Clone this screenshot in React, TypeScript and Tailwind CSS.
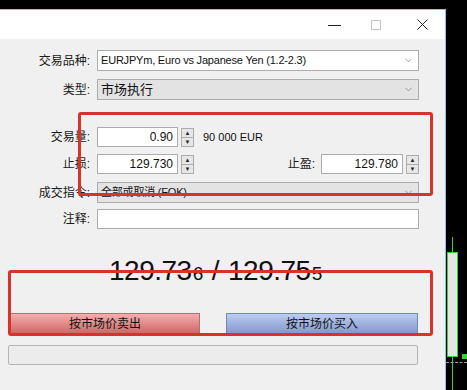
import { ChevronDown } from "lucide-react"

const cjk = { fontFamily: '"Liberation Sans", "Noto Sans CJK SC", sans-serif' }

function Label({ text }: { text: string }) {
  return <div className="w-[97px] pr-[7px] text-right text-[12px] text-[#1a1a1a] leading-none shrink-0">{text}</div>
}

function Select({ value, grey }: { value: string; grey?: boolean }) {
  return (
    <div className={`flex items-center h-[21px] w-[322px] border border-[#acacac] px-[3px] text-[11px] text-[#111] ${grey ? "bg-[#e3e3e3]" : "bg-white"}`}>
      <span className="flex-1 whitespace-nowrap tracking-[-0.2px]">{value}</span>
      <ChevronDown size={11} strokeWidth={1.2} className="text-[#555] mr-[1px]" />
    </div>
  )
}

function Spinner() {
  return (
    <div className="ml-[3px] flex flex-col h-[19px] w-[13px] border border-[#adadad] bg-[#e6e6e6]">
      <div className="flex-1 flex items-center justify-center border-b border-[#adadad] text-[6px] leading-none text-[#222]">▲</div>
      <div className="flex-1 flex items-center justify-center text-[6px] leading-none text-[#222]">▼</div>
    </div>
  )
}

function Num({ value, w }: { value: string; w: string }) {
  return (
    <div className={`h-[20px] ${w} border border-[#acacac] bg-white flex items-center justify-end pr-[4px] text-[12px] text-[#111]`}>{value}</div>
  )
}

export default function App() {
  return (
    <div className="w-[467px] h-[390px] bg-black flex relative overflow-hidden" style={cjk}>
      <div className="w-[446px] mt-[9px] border-t border-r border-[#8cc3e6] flex flex-col shrink-0">
        <div className="h-[29px] bg-white flex items-center justify-end">
          <div className="w-[13px] h-[1px] bg-[#222] mr-[30px] mt-[2px]" />
          <div className="w-[10px] h-[10px] border border-[#c4c4c4] mr-[36px]" />
          <svg width="11" height="11" viewBox="0 0 11 11" className="mr-[17px]">
            <path d="M0.5 0.5 L10.5 10.5 M10.5 0.5 L0.5 10.5" stroke="#222" strokeWidth="1" />
          </svg>
        </div>
        <div className="flex-1 bg-[#f0f0f0] flex flex-col pt-[11px]">
          <div className="flex items-center">
            <Label text="交易品种:" />
            <Select value="EURJPYm, Euro vs Japanese Yen (1.2-2.3)" />
          </div>
          <div className="flex items-center mt-[8px]">
            <Label text="类型:" />
            <div className="flex items-center h-[21px] w-[322px] border border-[#acacac] px-[3px] bg-[#e3e3e3] text-[13px] text-[#111]">
              <span className="flex-1">市场执行</span>
              <ChevronDown size={11} strokeWidth={1.2} className="text-[#555] mr-[1px]" />
            </div>
          </div>
          <div className="flex items-center mt-[27px]">
            <Label text="交易量:" />
            <Num value="0.90" w="w-[81px]" />
            <Spinner />
            <span className="ml-[9px] text-[11px] text-[#111]">90 000 EUR</span>
          </div>
          <div className="flex items-center mt-[7px]">
            <Label text="止损:" />
            <Num value="129.730" w="w-[81px]" />
            <Spinner />
            <span className="ml-auto mr-[6px] text-[12px] text-[#1a1a1a]">止盈:</span>
            <Num value="129.780" w="w-[82px]" />
            <Spinner />
            <div className="w-[26px]" />
          </div>
          <div className="flex items-center mt-[8px]">
            <Label text="成交指令:" />
            <Select value="全部或取消 (FOK)" grey />
          </div>
          <div className="flex items-center mt-[6px]">
            <Label text="注释:" />
            <div className="h-[20px] w-[322px] border border-[#acacac] bg-white" />
          </div>
          <div className="mt-[28px] pl-[109px] h-[28px] flex items-baseline text-[28px] leading-none text-[#111] tracking-[-0.5px]">
            <span>129.73</span>
            <span className="text-[19px] ml-[1px]">6</span>
            <span className="mx-[9px]">/</span>
            <span>129.75</span>
            <span className="text-[19px] ml-[1px]">5</span>
          </div>
          <div className="flex mt-[28px] px-[10px] gap-[26px] w-[428px]">
            <div className="w-[190px] h-[21px] border border-[#b07070] bg-gradient-to-b from-[#f4aeae] to-[#cf6868] flex items-center justify-center text-[12px] text-[#111]">按市场价卖出</div>
            <div className="w-[192px] h-[21px] border border-[#7088b8] bg-gradient-to-b from-[#bccdf0] to-[#8399d0] flex items-center justify-center text-[12px] text-[#111]">按市场价买入</div>
          </div>
          <div className="mt-[11px] ml-[8px] w-[410px] h-[20px] border border-[#b4b4b4] rounded-[2px] bg-[#ececec]" />
        </div>
      </div>
      <div className="flex-1 relative">
        <div className="absolute left-[6px] top-[237px] w-[1px] h-[153px] bg-[#3ccf3c]" />
        <div className="absolute left-[1px] top-[252px] w-[11px] h-[105px] border border-[#3ccf3c] bg-[#e3e6e3]" />
        <div className="absolute left-[0px] top-[362px] w-[21px] border-t border-dashed border-[#9aa09a]" />
        <div className="absolute left-[16px] top-[354px] w-[5px] h-[5px] bg-[#3ccf3c]" />
      </div>
      <div className="absolute left-[78px] top-[112px] w-[355px] h-[84px] border-[3px] border-[#d8332b] rounded-[3px]" />
      <div className="absolute left-[8px] top-[270px] w-[425px] h-[66px] border-[3px] border-[#d8332b] rounded-[3px]" />
    </div>
  )
}
